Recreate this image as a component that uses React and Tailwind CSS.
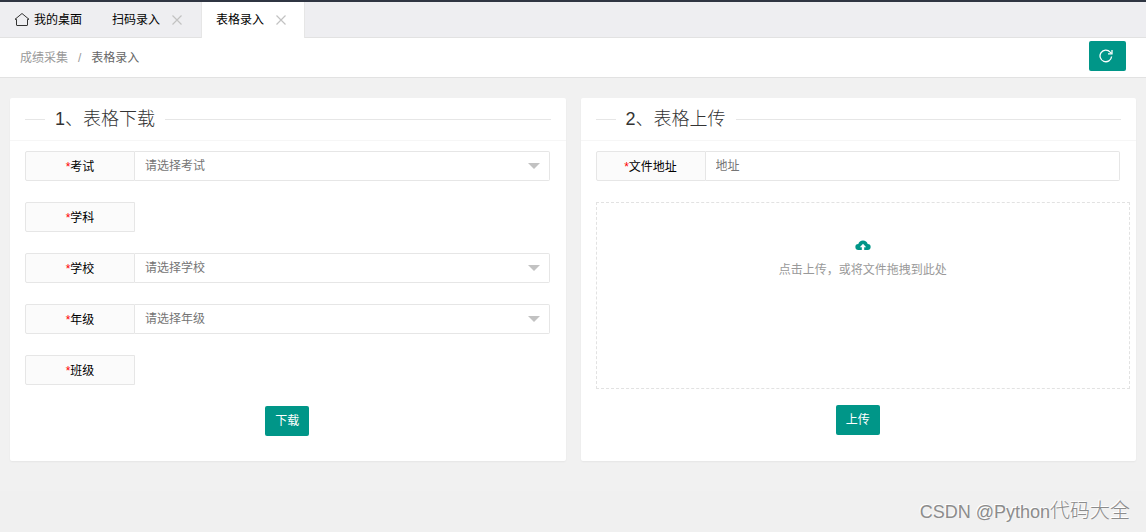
import React, { useState } from "react";

const tabs = [
  { id: "scan", title: "扫码录入" },
  { id: "table", title: "表格录入" },
];

const fields = [
  { id: "exam", label: "考试", placeholder: "请选择考试" },
  { id: "subject", label: "学科" },
  { id: "school", label: "学校", placeholder: "请选择学校" },
  { id: "grade", label: "年级", placeholder: "请选择年级" },
  { id: "class", label: "班级" },
];

const HomeIcon = () => (
  <svg viewBox="0 0 16 16" className="w-4 h-4" fill="none" stroke="#333" strokeWidth="1">
    <path d="M1 7.300 8 1.500l7 5.800h-1.500v5.700q0 .5-.5.5H3q-.5 0-.5-.5V7.300z" />
  </svg>
);

const CloseIcon = () => (
  <svg viewBox="0 0 10 10" className="w-2.5 h-2.5" fill="none" stroke="#c2c2c2" strokeWidth="1.2">
    <path d="M.5.5l9 9M9.5.5l-9 9" />
  </svg>
);

const RefreshIcon = () => (
  <svg viewBox="0 0 14 14" className="w-3.5 h-3.5" fill="none" stroke="#fff" strokeWidth="1.3">
    <path d="M12.600 7.500A5.800 5.800 0 1 1 11.200 3.100L12.400 4.300" />
    <path d="M13 1v3.900H9" />
  </svg>
);

const CloudIcon = () => (
  <svg viewBox="0 0 16 12" className="w-4 h-3">
    <path
      fill="#009688"
      d="M4 11H3.500A3 3 0 0 1 3.300 4.900 4.900 4.900 0 0 1 12.700 4.900 3 3 0 0 1 12.500 11H9.200V8.200h2L8 4.800 4.800 8.200h2V11z"
    />
  </svg>
);

const CardHeader = ({ title }) => (
  <div className="flex items-center h-[43px] px-[15px] border-b border-[#f6f6f6]">
    <span className="w-5 h-px bg-[#e6e6e6]" />
    <h2 className="px-2.5 text-lg font-light text-[#333]">{title}</h2>
    <span className="flex-1 h-px bg-[#e6e6e6]" />
  </div>
);

const FieldLabel = ({ id, children }) => (
  <label
    htmlFor={id}
    className="flex items-center justify-center w-[110px] h-[30px] pt-0.5 shrink-0 border border-[#e6e6e6] rounded-l-[2px] bg-[#fbfbfb] text-black"
  >
    <span className="text-[#f00]">*</span>
    {children}
  </label>
);

const App = () => {
  const [address, setAddress] = useState("");
  const [values, setValues] = useState({});

  return (
    <div className="flex flex-col min-h-screen bg-[#f1f1f1] text-xs text-[#333] font-['Liberation_Sans','Noto_Sans_CJK_SC',sans-serif]">
      <nav className="flex h-[38px] pl-3.5 border-t-2 border-t-[#2f3542] border-b border-b-[#e2e2e2] bg-[#eeeef1] text-black">
        <button type="button" className="flex items-center gap-1 pr-[15px]">
          <HomeIcon />
          我的桌面
        </button>
        {tabs.map((tab) => (
          <div
            key={tab.id}
            className={
              tab.id === "table"
                ? "flex items-center gap-3 h-9 pl-3.5 pr-[18px] border-x border-[#e6e6e6] bg-white"
                : "flex items-center gap-3 h-9 pl-[15px] pr-[19px]"
            }
          >
            <button type="button">{tab.title}</button>
            <button type="button" aria-label={`关闭${tab.title}`}>
              <CloseIcon />
            </button>
          </div>
        ))}
      </nav>

      <div className="flex items-center justify-between h-10 px-5 border-b border-[#e2e2e2] bg-white">
        <div className="flex gap-2.5">
          <a href="#" className="text-[#999]">成绩采集</a>
          <span className="text-[#999]">/</span>
          <span className="text-[#666]">表格录入</span>
        </div>
        <button
          type="button"
          aria-label="刷新"
          className="flex items-center justify-center w-[37px] h-[30px] mb-1 pr-1 rounded-[2px] bg-[#009688]"
        >
          <RefreshIcon />
        </button>
      </div>

      <main className="grid grid-cols-2 gap-[15px] px-2.5 pt-5">
        <section className="rounded-[2px] bg-white shadow-[0_1px_2px_0_rgba(0,0,0,0.05)]">
          <CardHeader title="1、表格下载" />
          <form className="flex flex-col gap-[21px] pl-[15px] pr-4 pt-2.5 pb-[25px]">
            {fields.map((field) => (
              <div key={field.id} className="flex">
                <FieldLabel id={field.placeholder ? field.id : undefined}>{field.label}</FieldLabel>
                {field.placeholder && (
                  <div className="relative flex-1">
                    <select
                      id={field.id}
                      value={values[field.id] || ""}
                      onChange={(e) => setValues({ ...values, [field.id]: e.target.value })}
                      className="w-full h-[30px] pl-2.5 pr-8 appearance-none border border-l-0 border-[#e6e6e6] rounded-r-[2px] bg-white text-[#757575]"
                    >
                      <option value="">{field.placeholder}</option>
                    </select>
                    <svg viewBox="0 0 12 6" className="absolute right-2.5 top-3 w-3 h-1.5 pointer-events-none">
                      <path d="M0 0h12L6 6z" fill="#c2c2c2" />
                    </svg>
                  </div>
                )}
              </div>
            ))}
            <button type="button" className="self-center h-[30px] px-2.5 rounded-[2px] bg-[#009688] text-white">
              下载
            </button>
          </form>
        </section>

        <section className="rounded-[2px] bg-white shadow-[0_1px_2px_0_rgba(0,0,0,0.05)]">
          <CardHeader title="2、表格上传" />
          <form className="flex flex-col pl-[15px] pr-4 pt-2.5 pb-[25px]">
            <div className="flex">
              <FieldLabel id="address">文件地址</FieldLabel>
              <input
                id="address"
                type="text"
                value={address}
                onChange={(e) => setAddress(e.target.value)}
                placeholder="地址"
                className="flex-1 min-w-0 h-[30px] px-2.5 border border-l-0 border-[#e6e6e6] rounded-r-[2px] placeholder:text-[#757575]"
              />
            </div>
            <button
              type="button"
              className="flex flex-col items-center gap-[11px] h-[187px] mt-[21px] -mr-2.5 pt-9 border border-dashed border-[#e2e2e2] text-[#999]"
            >
              <CloudIcon />
              点击上传，或将文件拖拽到此处
            </button>
            <button type="button" className="self-center h-[30px] mt-4 px-2.5 rounded-[2px] bg-[#009688] text-white">
              上传
            </button>
          </form>
        </section>
      </main>

      <footer className="h-[41px] mt-auto pr-4 bg-[#f0f0f0] text-right text-xl leading-[41px] font-light text-[#8c8c8c] [text-shadow:-1px_-1px_0_#fff]">
        <span className="text-lg">CSDN @Python</span>代码大全
      </footer>
    </div>
  );
};

export default App;
